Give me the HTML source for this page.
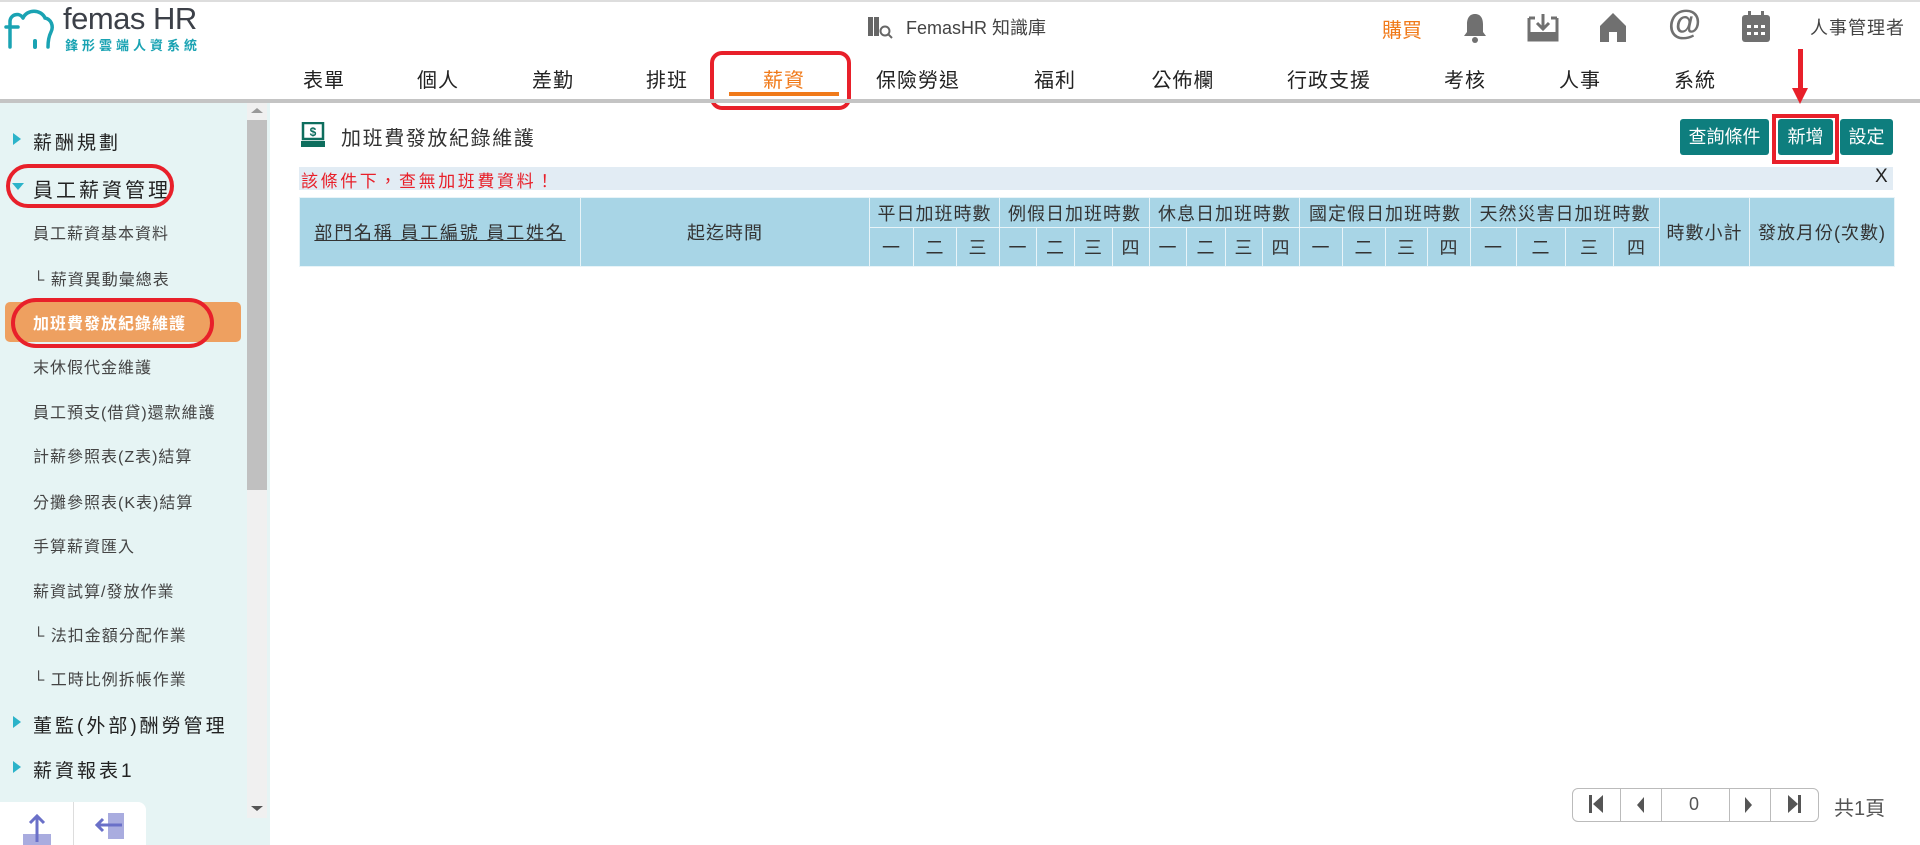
<!DOCTYPE html>
<html><head><meta charset="utf-8"><style>
*{margin:0;padding:0;box-sizing:border-box}
body{width:1920px;height:845px;overflow:hidden;background:#fff;font-family:"Liberation Sans","Noto Sans CJK TC",sans-serif;position:relative;color:#333}
.a{position:absolute;white-space:nowrap}
.nav{top:64px;font-size:20px;color:#222;transform:translateX(-50%);letter-spacing:1px}
.side{position:absolute;left:0;top:103px;width:270px;height:742px;background:#e6f4f4}
.si{position:absolute;left:33px;font-size:16px;color:#444;letter-spacing:1px}
.sh{position:absolute;left:33px;font-size:19px;color:#222;letter-spacing:3px}
.tri{position:absolute;left:13px;width:0;height:0;border-top:6px solid transparent;border-bottom:6px solid transparent;border-left:8px solid #2bb3c9}
.btn{position:absolute;top:119px;height:36px;background:#0e7e7e;color:#fff;font-size:18px;border-radius:3px;text-align:center;line-height:36px}
table{position:absolute;left:299px;top:197px;border-collapse:collapse;table-layout:fixed}
td{background:#a8d5e6;border:1px solid #e8f4f8;text-align:center;font-size:18px;color:#333;letter-spacing:1px;padding:0}
.ic{fill:#707070}
</style></head><body>
<div class="a" style="left:0;top:0;width:1920px;height:2px;background:#ddd"></div>
<!-- logo -->
<svg class="a" style="left:4px;top:5px" width="52" height="46" viewBox="0 0 52 46"><path d="M6 42V16a7 7 0 0 1 13 -3M2 22h12M19 13c4-9 18-9 22 0 6 1 9 8 6 14 -2 4 -3 8 -3 15" fill="none" stroke="#1aa3b3" stroke-width="3.5" stroke-linecap="round"/><path d="M31 36v6" stroke="#1aa3b3" stroke-width="4" stroke-linecap="round"/></svg>
<div class="a" style="left:63px;top:1px;font-size:31px;color:#3c4048;letter-spacing:-0.5px">femas HR</div>
<div class="a" style="left:65px;top:35px;font-size:13px;color:#1aa3b3;letter-spacing:4px;font-weight:bold">鋒形雲端人資系統</div>
<!-- top -->
<svg class="a" style="left:866px;top:14px" width="28" height="26" viewBox="0 0 28 26"><path d="M2 3h5v19H2zM8 3h5v19H8z" fill="#666"/><circle cx="19" cy="17" r="4.5" fill="none" stroke="#666" stroke-width="2"/><path d="M22 20l4 4" stroke="#666" stroke-width="2"/></svg>
<div class="a" style="left:906px;top:14px;font-size:18px;color:#444">FemasHR 知識庫</div>
<div class="a" style="left:1382px;top:14px;font-size:20px;color:#f07a1a">購買</div>
<svg class="a" style="left:1462px;top:12px" width="26" height="32" viewBox="0 0 26 32"><path d="M13 2c-6 0-8 5-8 10v8l-3 4h22l-3-4v-8c0-5-2-10-8-10z" class="ic"/><circle cx="13" cy="28" r="3" class="ic"/></svg>
<svg class="a" style="left:1526px;top:12px" width="34" height="30" viewBox="0 0 34 30"><path d="M3 6h6M25 6h6M3 6v22h28V6" fill="none" stroke="#707070" stroke-width="3"/><path d="M3 20h28v8H3z" class="ic"/><path d="M17 2v14M11 11l6 6 6-6" fill="none" stroke="#707070" stroke-width="3"/></svg>
<svg class="a" style="left:1598px;top:11px" width="30" height="32" viewBox="0 0 30 32"><path d="M15 2L2 15v16h9v-10h8v10h9V15z" class="ic"/></svg>
<div class="a" style="left:1668px;top:4px;font-size:34px;font-weight:bold;color:#707070">@</div>
<svg class="a" style="left:1740px;top:10px" width="32" height="34" viewBox="0 0 32 34"><rect x="2" y="5" width="28" height="27" rx="3" class="ic"/><rect x="8" y="1" width="3" height="7" class="ic"/><rect x="21" y="1" width="3" height="7" class="ic"/><g fill="#fff"><rect x="7" y="15" width="4" height="3"/><rect x="14" y="15" width="4" height="3"/><rect x="21" y="15" width="4" height="3"/><rect x="7" y="22" width="4" height="3"/><rect x="14" y="22" width="4" height="3"/><rect x="21" y="22" width="4" height="3"/></g></svg>
<div class="a" style="left:1810px;top:14px;font-size:18px;color:#444;letter-spacing:1px">人事管理者</div>
<!-- nav -->
<div class="a nav" style="left:324px">表單</div>
<div class="a nav" style="left:438px">個人</div>
<div class="a nav" style="left:553px">差勤</div>
<div class="a nav" style="left:667px">排班</div>
<div class="a nav" style="left:784px;color:#f07a1a">薪資</div>
<div class="a nav" style="left:918px">保險勞退</div>
<div class="a nav" style="left:1055px">福利</div>
<div class="a nav" style="left:1183px">公佈欄</div>
<div class="a nav" style="left:1329px">行政支援</div>
<div class="a nav" style="left:1465px">考核</div>
<div class="a nav" style="left:1580px">人事</div>
<div class="a nav" style="left:1695px">系統</div>
<div class="a" style="left:729px;top:92px;width:110px;height:4px;background:#f07a1a"></div>
<div class="a" style="left:710px;top:51px;width:141px;height:59px;border:4px solid #e8202a;border-radius:12px"></div>
<div class="a" style="left:0;top:99px;width:1920px;height:4px;background:#c4c4c4"></div>
<!-- sidebar -->
<div class="side">
<div class="a" style="left:247px;top:0;width:20px;height:715px;background:#f0f0f0"></div>
<div class="a" style="left:247px;top:17px;width:20px;height:370px;background:#c0c0c0"></div>
<div class="a" style="left:251px;top:5px;border-left:6px solid transparent;border-right:6px solid transparent;border-bottom:5px solid #999"></div>
<div class="a" style="left:251px;top:703px;border-left:6px solid transparent;border-right:6px solid transparent;border-top:5px solid #555"></div>
</div>
<div class="tri" style="top:133px"></div><div class="sh" style="top:128px">薪酬規劃</div>
<div class="a" style="left:12px;top:183px;border-left:6px solid transparent;border-right:6px solid transparent;border-top:7px solid #2bb3c9"></div>
<div class="sh" style="top:174px;font-size:20px">員工薪資管理</div>
<div class="a" style="left:6px;top:164px;width:168px;height:44px;border:4px solid #e8202a;border-radius:22px"></div>
<div class="si" style="top:220px">員工薪資基本資料</div>
<div class="si" style="top:266px">└ 薪資異動彙總表</div>
<div class="a" style="left:5px;top:302px;width:236px;height:40px;background:#eea060;border-radius:5px"></div>
<div class="si" style="top:310px;color:#fff;font-weight:bold">加班費發放紀錄維護</div>
<div class="a" style="left:11px;top:298px;width:203px;height:50px;border:4px solid #e8202a;border-radius:25px"></div>
<div class="si" style="top:354px">末休假代金維護</div>
<div class="si" style="top:399px">員工預支(借貸)還款維護</div>
<div class="si" style="top:443px">計薪參照表(Z表)結算</div>
<div class="si" style="top:489px">分攤參照表(K表)結算</div>
<div class="si" style="top:533px">手算薪資匯入</div>
<div class="si" style="top:578px">薪資試算/發放作業</div>
<div class="si" style="top:622px">└ 法扣金額分配作業</div>
<div class="si" style="top:666px">└ 工時比例拆帳作業</div>
<div class="tri" style="top:716px"></div><div class="sh" style="top:711px">董監(外部)酬勞管理</div>
<div class="tri" style="top:761px"></div><div class="sh" style="top:756px">薪資報表1</div>
<div class="a" style="left:0;top:802px;width:146px;height:43px;background:#fff;border-radius:0 8px 0 0"></div>
<div class="a" style="left:73px;top:802px;width:1px;height:43px;background:#ddd"></div>
<svg class="a" style="left:22px;top:812px" width="30" height="33" viewBox="0 0 30 33"><rect x="1" y="22" width="28" height="11" fill="#a9acdf"/><path d="M15 30V4M8 11l7-7 7 7" fill="none" stroke="#6a70c8" stroke-width="3"/></svg>
<svg class="a" style="left:92px;top:812px" width="34" height="30" viewBox="0 0 34 30"><rect x="16" y="1" width="16" height="26" fill="#a9acdf"/><path d="M30 13H5M11 7l-6 6 6 6" fill="none" stroke="#6a70c8" stroke-width="3"/></svg>
<!-- content -->
<svg class="a" style="left:300px;top:122px" width="26" height="26" viewBox="0 0 26 26"><rect x="3" y="1" width="20" height="16" fill="none" stroke="#0e6e5e" stroke-width="2.5"/><text x="13" y="14" font-size="12" font-weight="bold" text-anchor="middle" fill="#0e6e5e" font-family="Liberation Sans">$</text><path d="M1 19h24v6H1z" fill="#0e6e5e"/></svg>
<div class="a" style="left:341px;top:122px;font-size:20px;color:#333;letter-spacing:1.6px">加班費發放紀錄維護</div>
<div class="btn" style="left:1680px;width:89px">查詢條件</div>
<div class="btn" style="left:1778px;width:55px">新增</div>
<div class="btn" style="left:1840px;width:53px">設定</div>
<div class="a" style="left:1772px;top:114px;width:67px;height:50px;border:4px solid #e8202a"></div>
<div class="a" style="left:1798px;top:49px;width:5px;height:42px;background:#e8202a"></div>
<div class="a" style="left:1792px;top:88px;border-left:8px solid transparent;border-right:8px solid transparent;border-top:16px solid #e8202a"></div>
<div class="a" style="left:299px;top:167px;width:1594px;height:23px;background:#e2ecf4"></div>
<div class="a" style="left:301px;top:167px;font-size:17px;color:#e8202a;letter-spacing:2.6px">該條件下，查無加班費資料！</div>
<div class="a" style="left:1875px;top:166px;font-size:19px;color:#222">X</div>
<table>
<colgroup><col style="width:281px"><col style="width:289px"><col style="width:44px"><col style="width:43px"><col style="width:43px"><col style="width:37px"><col style="width:38px"><col style="width:38px"><col style="width:37px"><col style="width:37px"><col style="width:39px"><col style="width:37px"><col style="width:37px"><col style="width:43px"><col style="width:43px"><col style="width:42px"><col style="width:43px"><col style="width:46px"><col style="width:49px"><col style="width:48px"><col style="width:46px"><col style="width:90px"><col style="width:145px"></colgroup>
<tr style="height:30px"><td rowspan="2" style="text-decoration:underline;letter-spacing:1.8px">部門名稱 員工編號 員工姓名</td><td rowspan="2">起迄時間</td><td colspan="3">平日加班時數</td><td colspan="4">例假日加班時數</td><td colspan="4">休息日加班時數</td><td colspan="4">國定假日加班時數</td><td colspan="4">天然災害日加班時數</td><td rowspan="2">時數小計</td><td rowspan="2">發放月份(次數)</td></tr>
<tr style="height:39px"><td>一</td><td>二</td><td>三</td><td>一</td><td>二</td><td>三</td><td>四</td><td>一</td><td>二</td><td>三</td><td>四</td><td>一</td><td>二</td><td>三</td><td>四</td><td>一</td><td>二</td><td>三</td><td>四</td></tr>
</table>
<!-- pager -->
<div class="a" style="left:1572px;top:788px;width:247px;height:34px;border:1px solid #bbb;border-radius:6px"></div>
<div class="a" style="left:1620px;top:789px;width:1px;height:32px;background:#bbb"></div>
<div class="a" style="left:1661px;top:789px;width:1px;height:32px;background:#bbb"></div>
<div class="a" style="left:1729px;top:789px;width:1px;height:32px;background:#bbb"></div>
<div class="a" style="left:1770px;top:789px;width:1px;height:32px;background:#bbb"></div>
<svg class="a" style="left:1588px;top:794px" width="16" height="20"><rect x="1" y="1" width="3" height="18" fill="#555"/><path d="M15 1v18L5 10z" fill="#555"/></svg>
<svg class="a" style="left:1636px;top:796px" width="10" height="18"><path d="M8 1v16L1 9z" fill="#555"/></svg>
<div class="a" style="left:1689px;top:794px;font-size:18px;color:#555">0</div>
<svg class="a" style="left:1743px;top:796px" width="10" height="18"><path d="M2 1v16l7-8z" fill="#555"/></svg>
<svg class="a" style="left:1787px;top:794px" width="16" height="20"><path d="M1 1v18l10-9z" fill="#555"/><rect x="11" y="1" width="3" height="18" fill="#555"/></svg>
<div class="a" style="left:1834px;top:792px;font-size:20px;color:#555">共1頁</div>
</body></html>
